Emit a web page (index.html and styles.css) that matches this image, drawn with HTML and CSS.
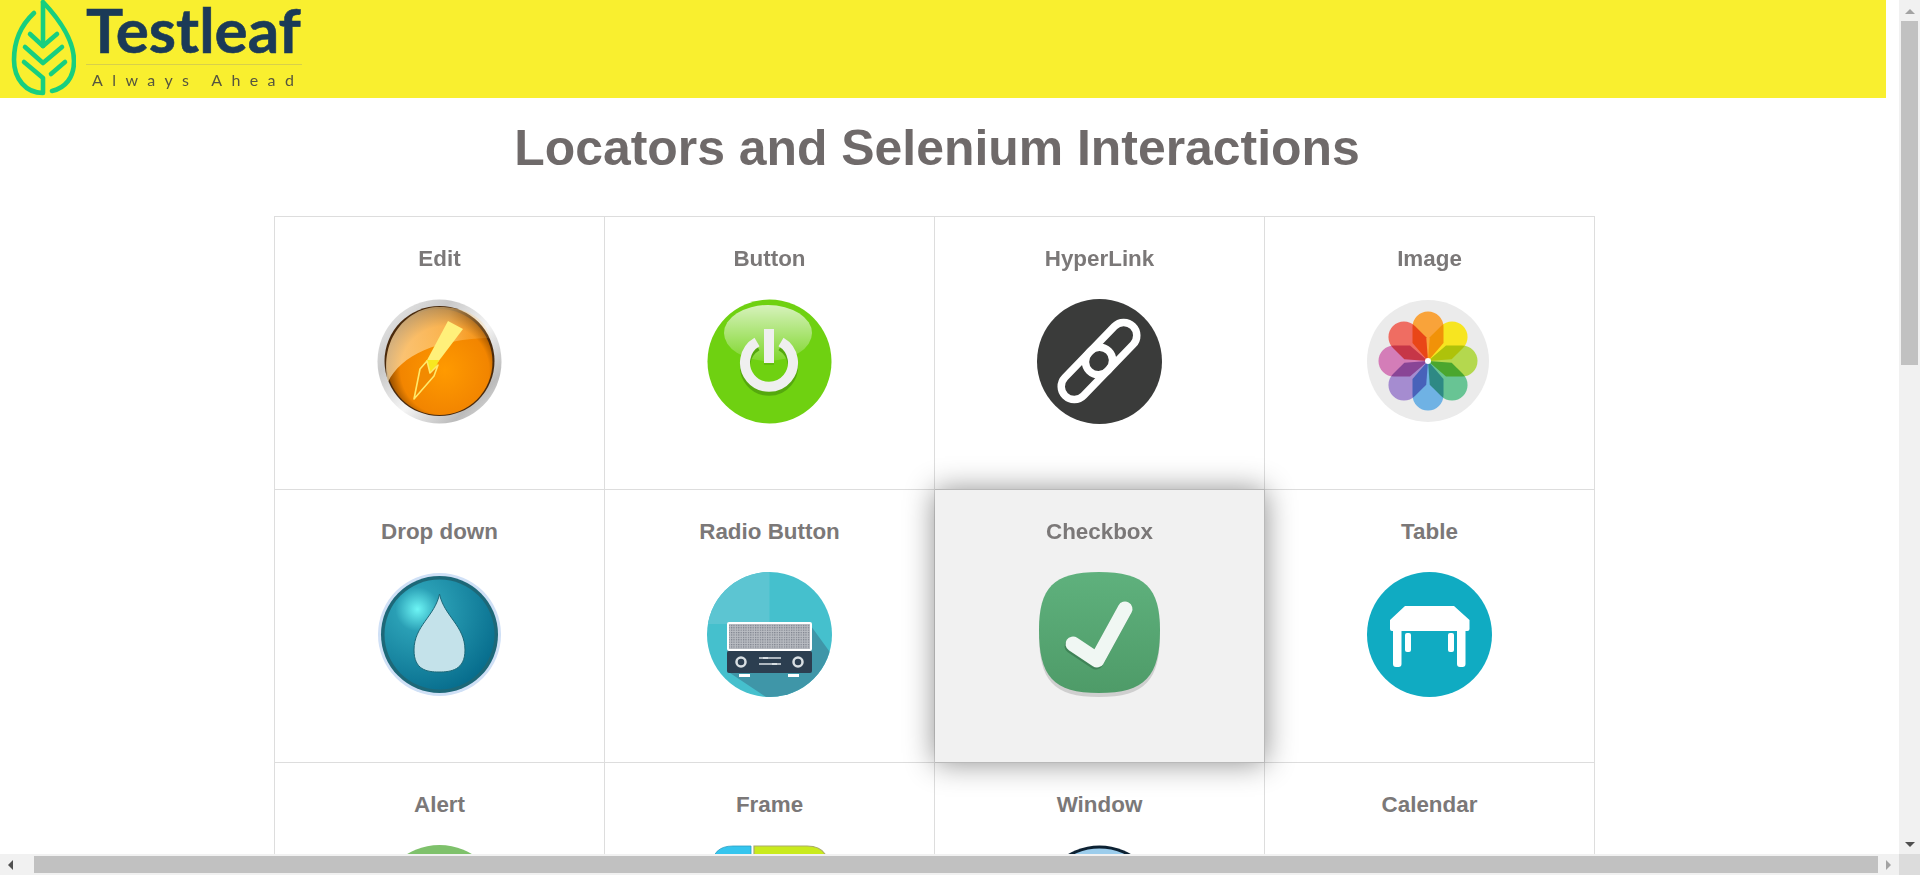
FILE: index.html
```html
<!DOCTYPE html>
<html lang="en">
<head>
<meta charset="utf-8">
<title>Locators and Selenium Interactions</title>
<link rel="stylesheet" href="styles.css">
</head>
<body>
<div class="window">
  <main class="viewport">
    <header class="banner">
      <div class="logo">
        <svg class="leaf" viewBox="0 0 76 98" aria-hidden="true">
          <g fill="none" stroke="#17cf7f" stroke-width="4.6" stroke-linecap="round" stroke-linejoin="round">
            <path d="M34 13C20 26 14 42 14 60C14 79 26 93 43 93V78L24 62"/>
            <path d="M43 2C60 20 74 40 74 61C74 78 65 88 52 91"/>
            <path d="M43 3V46"/>
            <path d="M30 34L43 46L57 34"/>
            <path d="M25 47L43 63L62 47"/>
            <path d="M51 74L65 62"/>
          </g>
        </svg>
        <div class="brand">
          <div class="brand-name">Testleaf</div>
          <div class="brand-tag">Always Ahead</div>
        </div>
      </div>
    </header>
    <h1 class="title">Locators and Selenium Interactions</h1>
    <section class="grid">
      <a class="cell"><h5 class="label">Edit</h5>
        <svg class="icon" viewBox="0 0 125 125" aria-hidden="true">
          <defs>
            <linearGradient id="eRing" x1="0" y1="0" x2="1" y2="1"><stop offset="0" stop-color="#f0f0f0"/><stop offset=".3" stop-color="#c9c9c9"/><stop offset=".55" stop-color="#f5f5f5"/><stop offset=".8" stop-color="#bbb"/><stop offset="1" stop-color="#eee"/></linearGradient>
            <radialGradient id="eFace" cx=".55" cy=".58" r=".58"><stop offset="0" stop-color="#ff9a00"/><stop offset=".72" stop-color="#f28500"/><stop offset="1" stop-color="#6f3700"/></radialGradient>
            <linearGradient id="eGloss" x1="0" y1="0" x2="1" y2="0"><stop offset="0" stop-color="#ffe6b8" stop-opacity=".7"/><stop offset=".6" stop-color="#ffd48a" stop-opacity=".55"/><stop offset="1" stop-color="#ffc060" stop-opacity=".12"/></linearGradient>
          </defs>
          <circle cx="62.5" cy="62.5" r="62" fill="url(#eRing)"/>
          <circle cx="62.5" cy="62" r="55" fill="#4a2a0c"/>
          <circle cx="62.5" cy="63" r="53" fill="url(#eFace)"/>
          <path d="M11 83C24 56 60 40 114 39C108 18 88 8 62 8C30 8 2 40 11 83Z" fill="url(#eGloss)"/>
          <path d="M71 22L86 30L61 63H49Z" fill="#fff07a"/>
          <path d="M49 61H62L58 70L52 73Z" fill="#f8e820"/>
          <path d="M37 100L43 70L50 62L53 74L61 66L57 77Z" fill="#f28a00" stroke="#ffe96a" stroke-width="1.6" stroke-linejoin="round"/>
        </svg></a>
      <a class="cell"><h5 class="label">Button</h5>
        <svg class="icon" viewBox="0 0 125 125" aria-hidden="true">
          <defs><linearGradient id="bGloss" x1="0" y1="0" x2="0" y2="1"><stop offset="0" stop-color="#fff" stop-opacity=".72"/><stop offset="1" stop-color="#fff" stop-opacity=".12"/></linearGradient></defs>
          <circle cx="62.5" cy="62.5" r="62" fill="#6fd111"/>
          <ellipse cx="61" cy="34" rx="44" ry="28" fill="url(#bGloss)"/>
          <path d="M74 47A24 24 0 1 1 50 47" fill="none" stroke="#55a80e" stroke-width="10"/>
          <path d="M74 43A24 24 0 1 1 50 43" fill="none" stroke="#efefef" stroke-width="10"/>
          <rect x="57" y="30" width="10" height="36" fill="#55a80e" opacity=".5"/>
          <rect x="57" y="30" width="10" height="34" fill="#efefef"/>
        </svg></a>
      <a class="cell"><h5 class="label">HyperLink</h5>
        <svg class="icon" viewBox="0 0 125 125" aria-hidden="true">
          <circle cx="62.5" cy="62.5" r="62.5" fill="#3a3b3a"/>
          <g fill="none" stroke="#fff" stroke-width="7.5">
            <rect x="42.85" y="36.6" width="62.5" height="26" rx="13" transform="rotate(-46 74.1 49.6)"/>
            <rect x="18.65" y="61.4" width="62.5" height="26" rx="13" transform="rotate(-46 49.9 74.4)"/>
          </g>
        </svg></a>
      <a class="cell"><h5 class="label">Image</h5>
        <svg class="icon" viewBox="0 0 125 125" aria-hidden="true">
          <circle cx="61" cy="62" r="61" fill="#ebebeb"/>
          <g class="flower" transform="translate(61 62)">
            <path class="petal" d="M0 0L-15.5 -18V-34A15.5 15.5 0 0 1 15.5 -34V-18Z" fill="#f9a33a"/>
            <path class="petal" d="M0 0L-15.5 -18V-34A15.5 15.5 0 0 1 15.5 -34V-18Z" fill="#f7e520" transform="rotate(45)"/>
            <path class="petal" d="M0 0L-15.5 -18V-34A15.5 15.5 0 0 1 15.5 -34V-18Z" fill="#b4d84e" transform="rotate(90)"/>
            <path class="petal" d="M0 0L-15.5 -18V-34A15.5 15.5 0 0 1 15.5 -34V-18Z" fill="#68c494" transform="rotate(135)"/>
            <path class="petal" d="M0 0L-15.5 -18V-34A15.5 15.5 0 0 1 15.5 -34V-18Z" fill="#6fb2e4" transform="rotate(180)"/>
            <path class="petal" d="M0 0L-15.5 -18V-34A15.5 15.5 0 0 1 15.5 -34V-18Z" fill="#a58cd0" transform="rotate(225)"/>
            <path class="petal" d="M0 0L-15.5 -18V-34A15.5 15.5 0 0 1 15.5 -34V-18Z" fill="#d47db8" transform="rotate(270)"/>
            <path class="petal" d="M0 0L-15.5 -18V-34A15.5 15.5 0 0 1 15.5 -34V-18Z" fill="#ef6d62" transform="rotate(315)"/>
            <circle r="3" fill="#fff"/>
          </g>
        </svg></a>

      <a class="cell"><h5 class="label">Drop down</h5>
        <svg class="icon" viewBox="0 0 125 125" aria-hidden="true">
          <defs>
            <radialGradient id="dFace" cx=".3" cy=".27" r=".8"><stop offset="0" stop-color="#6df5f5"/><stop offset=".25" stop-color="#2a9fb5"/><stop offset="1" stop-color="#076d8d"/></radialGradient>
          </defs>
          <circle cx="62.5" cy="62.5" r="61.5" fill="#cfe0f6"/>
          <circle cx="62.5" cy="62.5" r="58.5" fill="#1d6878"/>
          <circle cx="62.5" cy="62.5" r="55" fill="url(#dFace)"/>
          <path d="M62.5 22C67 44 88 54 88 78C88 98 74 100 62 100C50 100 37 98 37 78C37 54 58 44 62.5 22Z" fill="#c4e2ea" stroke="#1d6878" stroke-width="1"/>
        </svg></a>
      <a class="cell"><h5 class="label">Radio Button</h5>
        <svg class="icon" viewBox="0 0 125 125" aria-hidden="true">
          <defs>
            <clipPath id="rClip"><circle cx="62.5" cy="62.5" r="62.5"/></clipPath>
            <pattern id="rDots" width="2.4" height="2.4" patternUnits="userSpaceOnUse"><rect width="2.4" height="2.4" fill="#b9bcc2"/><rect width="1.2" height="1.2" fill="#787d88"/></pattern>
          </defs>
          <g clip-path="url(#rClip)">
            <rect width="125" height="125" fill="#45c0cd"/>
            <rect width="62.5" height="52" fill="#5cc5d2"/>
            <path d="M20 99L62 127H125V83L104 54H20Z" fill="#3f96a8"/>
          </g>
          <rect x="20" y="50" width="85" height="29" rx="2" fill="#fff"/>
          <rect x="22" y="52" width="81" height="25" fill="url(#rDots)"/>
          <rect x="20" y="79" width="85" height="22" rx="2" fill="#2c3e50"/>
          <g fill="none" stroke="#d9dfe3" stroke-width="2.5"><circle cx="34" cy="90" r="4.5"/><circle cx="91" cy="90" r="4.5"/></g>
          <path d="M52 86H74M52 92H74" stroke="#d9dfe3" stroke-width="1.4"/>
          <rect x="56" y="85" width="5" height="2" fill="#d9dfe3"/><rect x="65" y="91" width="5" height="2" fill="#d9dfe3"/>
          <rect x="32" y="102" width="11" height="3" fill="#fff"/><rect x="81" y="102" width="11" height="3" fill="#fff"/>
        </svg></a>
      <a class="cell cell-hover"><h5 class="label">Checkbox</h5>
        <svg class="icon" viewBox="0 0 125 125" aria-hidden="true">
          <defs><linearGradient id="cFace" x1="0" y1="0" x2="0" y2="1"><stop offset="0" stop-color="#5fb17d"/><stop offset="1" stop-color="#4e9b68"/></linearGradient></defs>
          <path d="M62 4C108 4 123 18 123 62C123 108 108 125 62 125C16 125 2 108 2 62C2 18 16 4 62 4Z" fill="#cfcfcf"/>
          <path d="M62 0C108 0 123 16 123 58C123 104 108 121 62 121C16 121 2 104 2 58C2 16 16 0 62 0Z" fill="url(#cFace)"/>
          <path d="M36 72L60 88L88 37" fill="none" stroke="#3f8357" stroke-width="15" stroke-linecap="round" stroke-linejoin="round" transform="translate(-1 2)"/>
          <path d="M36 72L60 88L88 37" fill="none" stroke="#f0f7f3" stroke-width="15" stroke-linecap="round" stroke-linejoin="round"/>
        </svg></a>
      <a class="cell"><h5 class="label">Table</h5>
        <svg class="icon" viewBox="0 0 125 125" aria-hidden="true">
          <circle cx="62.5" cy="62.5" r="62.5" fill="#10abc2"/>
          <path d="M38 34H87L102.5 48V57Q102.5 59 100.5 59H98.5V92Q98.5 95 95.5 95H93Q90 95 90 92V59H34.5V92Q34.5 95 31.5 95H29Q26 95 26 92V59H25Q23 59 23 57V48Z" fill="#fff"/>
          <rect x="38" y="61" width="6" height="19" rx="2" fill="#fff"/>
          <rect x="81" y="61" width="6" height="19" rx="2" fill="#fff"/>
        </svg></a>

      <a class="cell"><h5 class="label">Alert</h5>
        <svg class="icon" viewBox="0 0 125 125" aria-hidden="true"><circle cx="62.5" cy="62.5" r="62.5" fill="#7ec16b"/></svg></a>
      <a class="cell"><h5 class="label">Frame</h5>
        <svg class="icon" viewBox="0 0 125 125" aria-hidden="true">
          <path d="M5 125V22Q5 1 26 1H44V125Z" fill="#35c5ee" stroke="#2b9fc4" stroke-width=".8"/>
          <path d="M47 125V1H100Q121 1 121 22V125Z" fill="#c9ea1d" stroke="#a9ab6a" stroke-width="1.2"/>
        </svg></a>
      <a class="cell"><h5 class="label">Window</h5>
        <svg class="icon" viewBox="0 0 125 125" aria-hidden="true">
          <circle cx="62.5" cy="62.5" r="62" fill="#0d2233"/>
          <circle cx="62.5" cy="62.5" r="59" fill="#9ccdec"/>
        </svg></a>
      <a class="cell"><h5 class="label">Calendar</h5>
        <svg class="icon" viewBox="0 0 125 125" aria-hidden="true"><rect x="13" y="10" width="98" height="115" fill="#eef5fa"/></svg></a>
    </section>
  </main>
  <aside class="vbar">
    <span class="arrow arrow-up"></span>
    <span class="vthumb"></span>
    <span class="arrow arrow-down"></span>
  </aside>
  <div class="hbar">
    <span class="arrow arrow-left"></span>
    <span class="hthumb"></span>
    <span class="arrow arrow-right"></span>
  </div>
  <div class="corner"></div>
</div>
</body>
</html>
```
FILE: styles.css
```css
* { box-sizing: border-box; }
html, body { margin: 0; height: 100%; overflow: hidden; }
body { background: #fff; font-family: "Liberation Sans", Arial, sans-serif; }

.window {
  display: grid;
  grid-template-columns: 1fr 21px;
  grid-template-rows: 1fr 21px;
  width: 1920px;
  height: 875px;
}
.viewport { overflow: hidden; min-width: 0; min-height: 0; }

.banner { width: 1886px; height: 98px; background: #f9ef2f; }
.logo { display: flex; align-items: flex-start; height: 98px; }
.leaf { width: 76px; height: 98px; flex: none; }
.brand { margin-left: 10px; width: 216px; }
.brand-name {
  font-family: Lato, sans-serif;
  font-weight: 700;
  font-size: 62px;
  line-height: 59px;
  color: #1b3a57;
  -webkit-text-stroke: .6px #1b3a57;
}
.brand-tag {
  margin-top: 5px;
  border-top: 1px solid #d8d04a;
  padding: 5px 0 0 6px;
  font-family: Lato, sans-serif;
  font-size: 16px;
  line-height: 20px;
  letter-spacing: 9.4px;
  color: #55553f;
  white-space: nowrap;
}

.title {
  width: 1874px;
  margin: 22px 0 40px;
  text-align: center;
  font-size: 49.9px;
  line-height: 56px;
  font-weight: 700;
  color: #6f6a6a;
}

.grid {
  display: grid;
  grid-template-columns: repeat(4, 330px);
  grid-auto-rows: 273px;
  width: 1321px;
  margin-left: 274px;
  border-top: 1px solid #ddd;
  border-left: 1px solid #ddd;
}
.cell {
  display: flex;
  flex-direction: column;
  align-items: center;
  border-right: 1px solid #ddd;
  border-bottom: 1px solid #ddd;
  background: #fff;
}
.cell-hover {
  position: relative;
  background: #f1f1f1;
  border-right-color: #b9b9b9;
  border-bottom-color: #b9b9b9;
  box-shadow: 0 -1px 0 #b9b9b9, 0 0 28px rgba(0, 0, 0, .45);
}
.label {
  margin: 29px 0 0;
  font-size: 22.4px;
  line-height: 26px;
  font-weight: 700;
  color: #7b7878;
}
.icon { display: block; width: 125px; height: 125px; margin-top: 27px; flex: none; }
.flower { isolation: isolate; }
.petal { mix-blend-mode: multiply; }

.vbar {
  display: flex;
  flex-direction: column;
  align-items: center;
  background: #f1f1f1;
}
.vthumb { width: 17px; height: 344px; background: #c1c1c1; margin-top: 7px; }
.arrow { width: 0; height: 0; flex: none; border-style: solid; border-color: transparent; }
.arrow-up { margin-top: 9px; border-width: 0 5px 5px; border-bottom-color: #a3a3a3; }
.arrow-down { margin-top: auto; margin-bottom: 7px; border-width: 5px 5px 0; border-top-color: #505050; }

.hbar {
  display: flex;
  align-items: center;
  background: #f1f1f1;
  padding: 0 8px;
}
.hthumb { flex: none; width: 1844px; height: 17px; margin-left: 21px; background: #c1c1c1; }
.arrow-left { border-width: 5px 5px 5px 0; border-right-color: #505050; }
.arrow-right { margin-left: 8px; border-width: 5px 0 5px 5px; border-left-color: #a3a3a3; }
.corner { background: #dcdcdc; }
```
